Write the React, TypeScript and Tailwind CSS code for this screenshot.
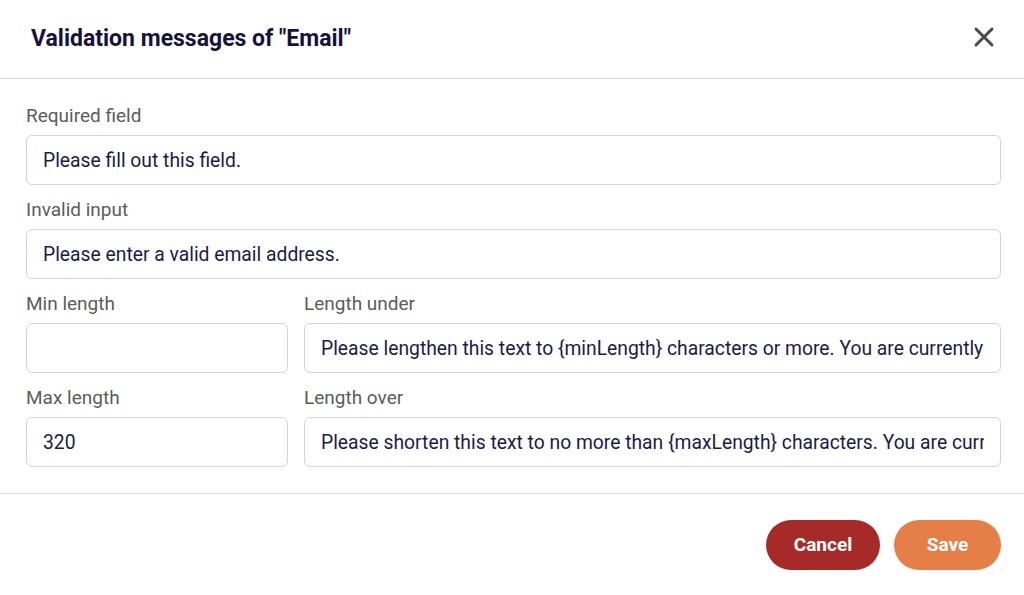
import { X } from 'lucide-react';

const font = { fontFamily: 'Roboto, "Liberation Sans", sans-serif' };

const Field = ({ label, value, className = '' }: { label: string; value: string; className?: string }) => (
  <div className={`flex flex-col ${className}`}>
    <label className="text-[19px] leading-[24px] text-[#5c5c5c] mb-[7px]">{label}</label>
    <input
      readOnly
      value={value}
      className="h-[50px] w-full rounded-[6px] border border-[#d4d4d4] bg-white px-[16px] text-[19.3px] text-[#1c1a4c] outline-none"
    />
  </div>
);

const App = () => {
  return (
    <div className="h-[595px] w-[1024px] bg-white flex flex-col" style={font}>
      <div className="h-[79px] shrink-0 flex items-center justify-between pl-[31px] pr-[24px] border-b border-[#dcdcdc]">
        <h2 className="text-[23px] font-bold text-[#15133d]">Validation messages of "Email"</h2>
        <X size={32} strokeWidth={2.2} className="text-[#4a4a4a] -mt-[5px]" />
      </div>

      <div className="flex flex-col gap-[13px] pl-[26px] pr-[23px] pt-[25px] pb-[26px] border-b border-[#dcdcdc]">
        <Field label="Required field" value="Please fill out this field." />
        <Field label="Invalid input" value="Please enter a valid email address." />
        <div className="flex gap-[16px]">
          <Field label="Min length" value="" className="w-[262px] shrink-0" />
          <Field
            label="Length under"
            value="Please lengthen this text to {minLength} characters or more. You are currently using {currentLength} characters."
            className="flex-1"
          />
        </div>
        <div className="flex gap-[16px]">
          <Field label="Max length" value="320" className="w-[262px] shrink-0" />
          <Field
            label="Length over"
            value="Please shorten this text to no more than {maxLength} characters. You are currently using {currentLength} characters."
            className="flex-1"
          />
        </div>
      </div>

      <div className="flex justify-end gap-[14px] pt-[26px] pr-[23px]">
        <button className="h-[50px] w-[114px] rounded-full bg-[#a52a28] text-white text-[19px] font-bold">Cancel</button>
        <button className="h-[50px] w-[107px] rounded-full bg-[#e67e48] text-white text-[19px] font-bold">Save</button>
      </div>
    </div>
  );
};

export default App;
